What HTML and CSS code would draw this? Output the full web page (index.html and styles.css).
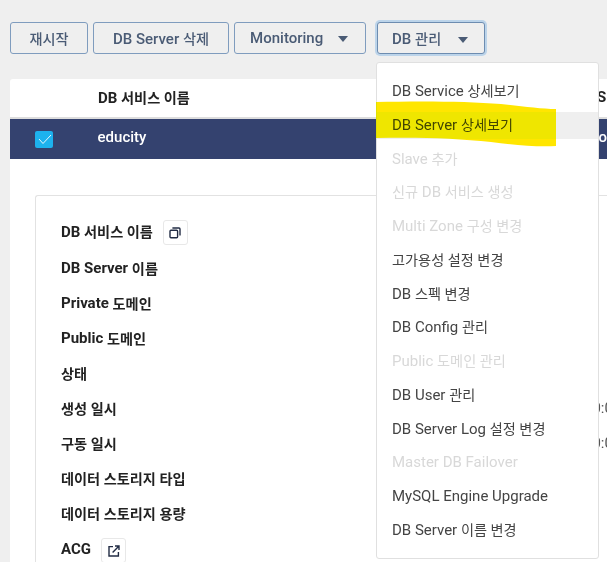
FILE: index.html
```html
<!DOCTYPE html>
<html lang="ko">
<head>
  <meta charset="UTF-8">
  <meta name="viewport" content="width=device-width, initial-scale=1.0">
  <title>DB 관리</title>
  <link rel="stylesheet" href="styles.css">
</head>
<body>
  <div class="toolbar">
    <button class="btn btn-restart"><span class="ko">재시작</span></button>
    <button class="btn btn-delete">DB Server <span class="ko">삭제</span></button>
    <button class="btn btn-monitor">Monitoring <span class="caret"></span></button>
    <button class="btn btn-manage">DB <span class="ko">관리</span> <span class="caret"></span></button>
  </div>

  <div class="card">
    <div class="table-head">
      <div class="col-check"></div>
      <div class="col-name">DB <span class="ko">서비스 이름</span></div>
      <div class="col-status">S</div>
    </div>
    <div class="table-row">
      <div class="col-check">
        <span class="checkbox">
          <svg width="18" height="17" viewBox="0 0 18 17"><path d="M4 8 L8 12.5 L16 4" fill="none" stroke="#e8f6fd" stroke-width="1"/></svg>
        </span>
      </div>
      <div class="col-name">educity</div>
      <div class="col-status">to</div>
    </div>

    <div class="detail">
      <div class="detail-row">
        <span class="label-raised">DB <span class="ko">서비스 이름</span></span>
        <span class="icon-btn">
          <svg width="12" height="12" viewBox="0 0 12 12" fill="none" stroke="#222c44" stroke-width="1.4">
            <rect x="1" y="3.2" width="7.6" height="7.6" rx="1"/>
            <path d="M3.4 1 H10 a1 1 0 0 1 1 1 V8.4"/>
          </svg>
        </span>
      </div>
      <div class="detail-row">DB Server&nbsp;<span class="ko">이름</span></div>
      <div class="detail-row">Private&nbsp;<span class="ko">도메인</span></div>
      <div class="detail-row">Public&nbsp;<span class="ko">도메인</span></div>
      <div class="detail-row"><span class="ko">상태</span></div>
      <div class="detail-row"><span class="ko">생성 일시</span><span class="time">00:0</span></div>
      <div class="detail-row"><span class="ko">구동 일시</span><span class="time">00:0</span></div>
      <div class="detail-row"><span class="ko">데이터 스토리지 타입</span></div>
      <div class="detail-row"><span class="ko">데이터 스토리지 용량</span></div>
      <div class="detail-row detail-row-last">
        <span class="label-raised">ACG</span>
        <span class="icon-btn">
          <svg width="12" height="12" viewBox="0 0 12 12" fill="none" stroke="#222c44" stroke-width="1.4">
            <path d="M5 1.6 H1 V11 H10.4 V7"/>
            <path d="M4.6 7.4 L11 1 M7 1 H11 V5"/>
          </svg>
        </span>
      </div>
    </div>
  </div>

  <ul class="dropdown">
    <li>DB Service <span class="ko">상세보기</span></li>
    <li class="active">DB Server <span class="ko">상세보기</span></li>
    <li class="disabled">Slave <span class="ko">추가</span></li>
    <li class="disabled"><span class="ko">신규</span> DB <span class="ko">서비스 생성</span></li>
    <li class="disabled">Multi Zone <span class="ko">구성 변경</span></li>
    <li><span class="ko">고가용성 설정 변경</span></li>
    <li>DB <span class="ko">스펙 변경</span></li>
    <li>DB Config <span class="ko">관리</span></li>
    <li class="disabled">Public <span class="ko">도메인 관리</span></li>
    <li>DB User <span class="ko">관리</span></li>
    <li>DB Server Log <span class="ko">설정 변경</span></li>
    <li class="disabled">Master DB Failover</li>
    <li>MySQL Engine Upgrade</li>
    <li>DB Server <span class="ko">이름 변경</span></li>
  </ul>

  <svg class="marker" width="181" height="46" viewBox="0 0 181 46">
    <path d="M0 1 C40 0 90 0 125 3 C145 5 165 8 180 8 V45 C160 46 140 44 115 41 C80 37 40 36 0 37 Z" fill="#ffe600"/>
  </svg>
</body>
</html>
```

FILE: styles.css
```css
* { margin: 0; padding: 0; box-sizing: border-box; }
html, body {
  width: 607px;
  height: 562px;
  overflow: hidden;
}
body {
  position: relative;
  background: #efefef;
  color: #222;
  font-family: Roboto, "Noto Sans CJK KR", sans-serif;
  font-size: 15px;
}
.ko { font-size: 14.2px; }
.toolbar {
  display: flex;
  gap: 5px;
  padding: 22px 0 0 10px;
  height: 79px;
}
.btn {
  height: 32px;
  background: #efefef;
  border: 1px solid #7f9cbe;
  border-radius: 3px;
  color: #4a5b75;
  font-family: inherit;
  font-size: 15px;
  font-weight: 500;
  white-space: nowrap;
}
.btn-restart { width: 78px; }
.btn-delete { width: 136px; }
.btn-monitor {
  width: 132px;
  padding-right: 2px;
}
.btn-manage {
  width: 108px;
  margin-left: 6px;
  padding-right: 2px;
  border-color: #6d8cb0;
  box-shadow: 0 0 0 2px #bcd4ea;
}
.btn-manage .caret { margin-left: 13px; }
.caret {
  display: inline-block;
  width: 0;
  height: 0;
  margin-left: 11px;
  vertical-align: 1px;
  border-left: 5px solid transparent;
  border-right: 5px solid transparent;
  border-top: 6px solid #4a5b75;
}
.card {
  margin-left: 10px;
  height: 483px;
  background: #fff;
  border-radius: 3px 0 0 0;
  overflow: hidden;
}
.table-head, .table-row {
  display: flex;
  align-items: center;
  white-space: nowrap;
}
.table-head {
  height: 40px;
  padding-bottom: 3px;
  border-bottom: 2px solid #ddd;
  font-weight: 700;
  color: #222;
}
.table-row {
  height: 40px;
  padding-bottom: 4px;
  background: #34426f;
  color: #fff;
  font-weight: 500;
}
.table-row .col-check { padding-top: 4px; }
.col-check {
  display: flex;
  justify-content: center;
  width: 68px;
}
.col-name {
  width: 500px;
  padding-left: 20px;
}
.col-status { padding-left: 19px; }
.checkbox {
  display: flex;
  width: 18px;
  height: 17px;
  background: #1db2ee;
  border-radius: 2px;
}
.detail {
  display: flex;
  flex-direction: column;
  margin: 36px 0 0 25px;
  padding: 19px 0 0 25px;
  height: 400px;
  border: 1px solid #e2e2e2;
  border-right: 0;
  border-radius: 3px 0 0 0;
}
.detail-row {
  position: relative;
  display: flex;
  align-items: center;
  flex: none;
  height: 35px;
  font-weight: 700;
  color: #222;
}
.detail-row-last { margin-top: 3px; }
.label-raised { margin-bottom: 4px; }
.icon-btn {
  display: flex;
  align-items: center;
  justify-content: center;
  width: 25px;
  height: 25px;
  margin-left: 10px;
  border: 1px solid #e8e8e8;
  border-radius: 3px;
}
.time {
  position: absolute;
  left: 523px;
  color: #555;
  font-weight: 400;
}
.dropdown {
  position: absolute;
  left: 376px;
  top: 62px;
  width: 223px;
  height: 497px;
  padding: 15px 0;
  list-style: none;
  background: #fff;
  border: 1px solid #e0e0e0;
  border-radius: 3px;
}
.dropdown li {
  height: 27px;
  margin-bottom: 6.75px;
  padding-left: 15px;
  line-height: 27px;
  color: #444;
  white-space: nowrap;
}
.dropdown li.active { background: #efefef; }
.dropdown li.disabled { color: #d8d8d8; }
.marker {
  position: absolute;
  left: 376px;
  top: 101px;
  mix-blend-mode: darken;
}
```
